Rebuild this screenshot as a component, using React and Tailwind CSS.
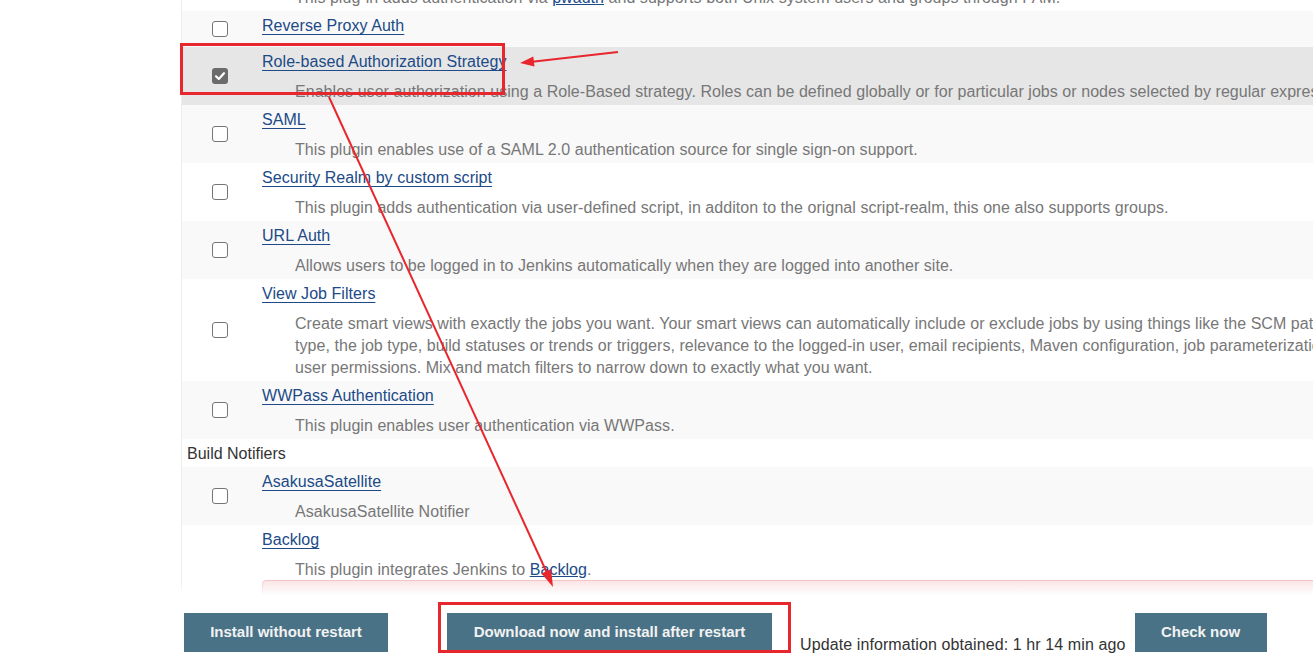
const rows = [
  {
    bg: "bg-white",
    title: "PAM Authentication",
    desc: (
      <>
        This plug-in adds authentication via{" "}
        <a className="text-[#204a87] underline">pwauth</a> and supports both Unix
        system users and groups through PAM.
      </>
    ),
  },
  { bg: "bg-[#f9f9f9]", title: "Reverse Proxy Auth", desc: null },
  {
    bg: "bg-[#e6e6e6]",
    checked: true,
    title: "Role-based Authorization Strategy",
    desc: "Enables user authorization using a Role-Based strategy. Roles can be defined globally or for particular jobs or nodes selected by regular expressions.",
  },
  {
    bg: "bg-[#f9f9f9]",
    title: "SAML",
    desc: "This plugin enables use of a SAML 2.0 authentication source for single sign-on support.",
  },
  {
    bg: "bg-white",
    title: "Security Realm by custom script",
    desc: "This plugin adds authentication via user-defined script, in additon to the orignal script-realm, this one also supports groups.",
  },
  {
    bg: "bg-[#f9f9f9]",
    title: "URL Auth",
    desc: "Allows users to be logged in to Jenkins automatically when they are logged into another site.",
  },
  {
    bg: "bg-white",
    title: "View Job Filters",
    desc: (
      <>
        Create smart views with exactly the jobs you want. Your smart views can automatically include or exclude jobs by using things like the SCM path or
        <br />
        type, the job type, build statuses or trends or triggers, relevance to the logged-in user, email recipients, Maven configuration, job parameterization, and
        <br />
        user permissions. Mix and match filters to narrow down to exactly what you want.
      </>
    ),
  },
  {
    bg: "bg-[#f9f9f9]",
    title: "WWPass Authentication",
    desc: "This plugin enables user authentication via WWPass.",
  },
  { category: "Build Notifiers" },
  {
    bg: "bg-[#f9f9f9]",
    title: "AsakusaSatellite",
    desc: "AsakusaSatellite Notifier",
  },
  {
    bg: "bg-white",
    title: "Backlog",
    desc: (
      <>
        This plugin integrates Jenkins to{" "}
        <a className="text-[#204a87] underline">Backlog</a>.
      </>
    ),
    alert: true,
  },
];

function Checkbox({ checked }) {
  if (checked) {
    return (
      <span className="w-[16px] h-[16px] rounded-[3px] bg-[#6b6b6b] flex items-center justify-center">
        <svg width="12" height="12" viewBox="0 0 12 12">
          <path d="M2 6.3 L4.8 9 L10 3.2" fill="none" stroke="white" strokeWidth="2.2" strokeLinecap="round" strokeLinejoin="round" />
        </svg>
      </span>
    );
  }
  return <span className="w-[16px] h-[16px] rounded-[3px] border border-[#767676] bg-white" />;
}

function PluginRow({ row }) {
  if (row.category) {
    return (
      <div className="bg-white pl-[5px] pt-[4px] pb-[2px] leading-[22px] text-[#333]">{row.category}</div>
    );
  }
  return (
    <div className={`flex items-center ${row.bg}`}>
      <div className="w-[76px] shrink-0 flex justify-center">
        <Checkbox checked={row.checked} />
      </div>
      <div className="flex-1 pl-[4px] pt-[4px] pb-[2px] leading-[22px] tracking-[0.05px]">
        <a className="text-[#204a87] underline underline-offset-[3px]">{row.title}</a>
        <div className="mt-[8px] pl-[33px] text-[#777] whitespace-nowrap">{row.desc}</div>
        {row.alert && (
          <div className="h-[100px] -mt-[1px] rounded-[4px] border border-[#f2c6c6] bg-gradient-to-b from-[#fbe4e4] to-white" />
        )}
      </div>
    </div>
  );
}

export default function App() {
  return (
    <div className="relative w-[1313px] h-[659px] bg-white overflow-hidden font-['Liberation_Sans',Arial,sans-serif] text-[16px]">
      <div className="relative h-[595px] overflow-hidden">
        <div className="ml-[181px] w-[1300px] -mt-[47px] border-l border-[#eeeeee]">
          {rows.map((row, i) => (
            <PluginRow key={i} row={row} />
          ))}
        </div>
        <div className="absolute left-0 right-0 bottom-0 h-[14px] bg-gradient-to-b from-white/0 to-white" />
      </div>

      <div className="h-[64px] flex items-start pt-[18px]">
        <button className="ml-[184px] w-[204px] h-[39px] bg-[#4a7287] text-[#f2f2f2] font-bold text-[15px]">
          Install without restart
        </button>
        <button className="ml-[59px] w-[325px] h-[39px] bg-[#4a7287] text-[#f2f2f2] font-bold text-[15px]">
          Download now and install after restart
        </button>
        <span className="ml-[28px] mt-[21px] leading-[22px] text-[#333] whitespace-nowrap tracking-[0.1px]">
          Update information obtained: 1 hr 14 min ago
        </span>
        <button className="ml-[9px] w-[132px] h-[39px] bg-[#4a7287] text-[#f2f2f2] font-bold text-[15px]">
          Check now
        </button>
      </div>

      <svg className="absolute inset-0 pointer-events-none" width="1313" height="659" viewBox="0 0 1313 659">
        <rect x="181.5" y="44.5" width="322" height="49" fill="none" stroke="#e8262d" strokeWidth="3" />
        <line x1="618" y1="52" x2="530" y2="62" stroke="#e8262d" strokeWidth="2" />
        <polygon points="520,63 534.5,66.6 533.3,56.4" fill="#e8262d" />
        <line x1="329" y1="97" x2="547" y2="573" stroke="#e8262d" strokeWidth="2" />
        <polygon points="553,587 551,569 541.5,573.5" fill="#e8262d" />
        <rect x="439.5" y="603.5" width="350" height="48" fill="none" stroke="#e8262d" strokeWidth="3" />
      </svg>
    </div>
  );
}
